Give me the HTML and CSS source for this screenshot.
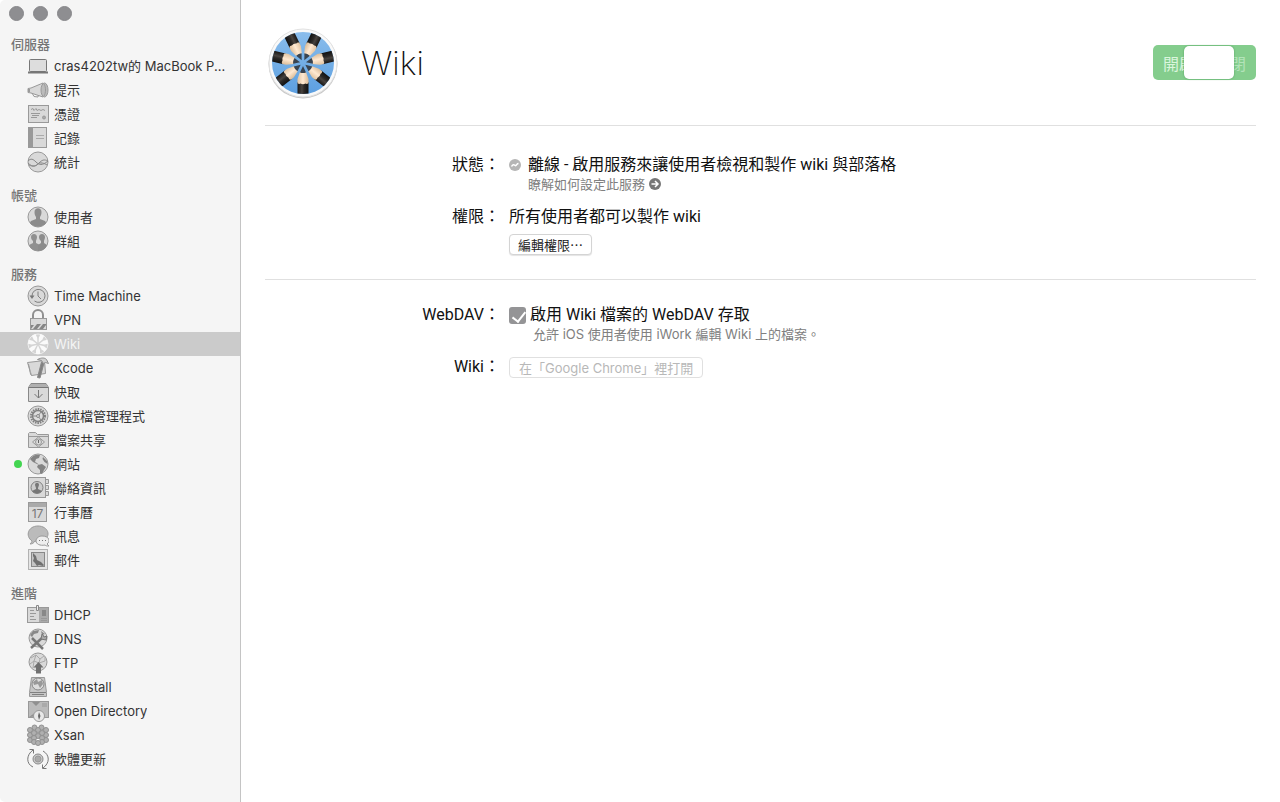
FILE: index.html
```html
<!DOCTYPE html>
<html lang="zh-Hant">
<head>
  <meta charset="UTF-8">
  <meta name="viewport" content="width=device-width, initial-scale=1.0">
  <title>Server - Wiki</title>
  <link rel="stylesheet" href="styles.css">
</head>
<body>

  <aside class="sidebar">
    <div class="window-buttons">
      <button type="button" aria-label="關閉視窗"></button>
      <button type="button" aria-label="縮到最小"></button>
      <button type="button" aria-label="縮放"></button>
    </div>

    <nav>
      <section class="group">
        <h2>伺服器</h2>
        <a href="#" class="item">
          <svg class="icon" viewBox="0 0 22 22"><rect x="2.500" y="4.500" width="17" height="12" rx="1" fill="#ddd" stroke="#777"/><path d="M1 17.500h20" stroke="#777" stroke-width="2"/></svg>
          <span>cras4202tw的 MacBook P...</span>
        </a>
        <a href="#" class="item">
          <svg class="icon" viewBox="0 0 22 22"><path d="M1 9.500l3-.5 12-5v14l-12-4-3-.5z"/><ellipse cx="17.500" cy="11" rx="3.500" ry="7" fill="#bbb"/><path d="M17 5c2 3 2 9 0 12M5 14l2 3.500 4 .5.5-2" fill="none"/><path d="M2 10v3" stroke-width="2"/></svg>
          <span>提示</span>
        </a>
        <a href="#" class="item">
          <svg class="icon" viewBox="0 0 22 22"><rect x="1.500" y="2.500" width="20" height="17"/><path d="M4 6.500l2-1 1 2 2-2 1 2 2-1 2 1 2-1 2 1M4 10.500h9M5 12.500h7M4 14.500h6" fill="none"/><circle cx="17" cy="14.500" r="1.500" fill="#aaa"/></svg>
          <span>憑證</span>
        </a>
        <a href="#" class="item">
          <svg class="icon" viewBox="0 0 22 22"><rect x="1.500" y=".500" width="18" height="20"/><path d="M2 1h4v19H2z" fill="#999" stroke="none"/><path d="M9 8.500h8M9 11.500h8" stroke="#aaa"/></svg>
          <span>記錄</span>
        </a>
        <a href="#" class="item">
          <svg class="icon" viewBox="0 0 22 22"><circle cx="11" cy="11" r="10"/><path d="M1 10c3-3 5-2 8 1s6 4 12-1M1 12c5 5 8 3 11 0s5-4 9-2M2 14c4 2 7 1 9-1s6-1 9 1" fill="none" stroke="#888"/></svg>
          <span>統計</span>
        </a>
      </section>

      <section class="group">
        <h2>帳號</h2>
        <a href="#" class="item">
          <svg class="icon" viewBox="0 0 22 22"><circle cx="11" cy="11" r="10"/><path d="M7.500 6c0-5 7-5 7 0 0 3-1 4-1.500 5v2l5 2c1 1 1 2 1 2-4 5-12 5-16 0 0 0 0-1 1-2l5-2v-2c-.5-1-1.500-2-1.500-5z" fill="#8c8c8c" stroke="none"/></svg>
          <span>使用者</span>
        </a>
        <a href="#" class="item">
          <svg class="icon" viewBox="0 0 22 22"><circle cx="11" cy="11" r="10"/><path d="M4 7c0-4 6-4 6 0 0 2-1 3-1 4v2l3 1.500V21C6 21 3 18 2 15l4-2v-2C5 10 4 9 4 7z" fill="#909090" stroke="none"/><path d="M12 7c0-4 6-4 6 0 0 2-1 3-1 4v2l3 2c-1 3-4 6-9 6v-6l3-2v-2c-1-1-2-2-2-4z" fill="#8c8c8c" stroke="none"/></svg>
          <span>群組</span>
        </a>
      </section>

      <section class="group">
        <h2>服務</h2>
        <a href="#" class="item">
          <svg class="icon" viewBox="0 0 22 22"><circle cx="11" cy="11" r="10"/><path d="M5 11a6.500 6.500 0 1 1 2.500 5M11 6.500V11l3 3" fill="none" stroke="#808080"/><path d="M2.500 10.500h5L5 14z" fill="#777" stroke="none"/></svg>
          <span>Time Machine</span>
        </a>
        <a href="#" class="item">
          <svg class="icon" viewBox="0 0 22 22"><path d="M6 11V6a5 5 0 0 1 10 0v5" fill="none" stroke="#909090" stroke-width="2"/><rect x="3.500" y="9.500" width="16" height="11"/><path d="M4 16h3l-3 4zM10 15h4l-4 5H6zM16 15h3v1l-3 4h-4z" fill="#858585" stroke="none"/></svg>
          <span>VPN</span>
        </a>
        <a href="#" class="item selected" aria-current="page">
          <svg class="icon" viewBox="-11 -11 22 22">
            <circle r="10" fill="#d4d4d4" stroke="#eee"/>
            <g fill="#fafafa" stroke="none">
              <path id="spoke" d="M0 1.500L-2 6v4h4V6z"/>
              <use href="#spoke" transform="rotate(51.43)"/>
              <use href="#spoke" transform="rotate(102.86)"/>
              <use href="#spoke" transform="rotate(154.29)"/>
              <use href="#spoke" transform="rotate(205.71)"/>
              <use href="#spoke" transform="rotate(257.14)"/>
              <use href="#spoke" transform="rotate(308.57)"/>
            </g>
          </svg>
          <span>Wiki</span>
        </a>
        <a href="#" class="item">
          <svg class="icon" viewBox="0 0 22 22"><path d="M.5 5.500l17-2 1 13-14 2z"/><path d="M1.500 7l2 10 1 1.500"/><path d="M14.500 5l-4 15.500 2.500.5 4-15z" fill="#808080" stroke="#888"/><path d="M10.500 2.500c4-2 7-2 9 0l2 4-3-1-2 1-2-3z" fill="#d0d0d0" stroke="#909090"/></svg>
          <span>Xcode</span>
        </a>
        <a href="#" class="item">
          <svg class="icon" viewBox="0 0 22 22"><path d="M1.500 6.500L4 2.500h15l2.500 4v14h-20z" stroke="#888"/><path d="M2 6l2-3h15l2 3z" fill="#b0b0b0" stroke="none"/><path d="M1.500 6.500h20M11.500 9v8M7.500 13l4 4 4-4" fill="none" stroke="#777"/></svg>
          <span>快取</span>
        </a>
        <a href="#" class="item">
          <svg class="icon" viewBox="0 0 22 22"><circle cx="11" cy="11" r="10"/><circle cx="11" cy="11" r="7" fill="none" stroke="#808080" stroke-width="2" stroke-dasharray="1.500 1"/><circle cx="11" cy="11" r="5.500" fill="#ddd" stroke="#808080" stroke-width="1.500"/><path d="M11 11H6M11 11l3-4M11 11l3 4" stroke="#888"/><circle cx="11" cy="11" r="1.500" stroke="#888"/></svg>
          <span>描述檔管理程式</span>
        </a>
        <a href="#" class="item">
          <svg class="icon" viewBox="0 0 22 22"><path d="M1.500 18.500v-14l1-1h6l2 2h11v13z"/><path d="M2 7.500h19"/><path d="M11.500 8l6 5-6 5-6-5z" fill="#ddd"/><circle cx="11.500" cy="13" r="3"/><path d="M11.500 11v3" stroke="#666"/></svg>
          <span>檔案共享</span>
        </a>
        <a href="#" class="item running">
          <svg class="icon" viewBox="0 0 22 22"><circle cx="11" cy="11" r="10"/><path d="M4 5c2-3 6-4 9-3l-1 3-3 1-1 3 2 1 2 2-2-1-4-2-3-3zM11 12l4-1 4 3-2 3-2 4-2-1v-3l-3-3zM16 4l4 4 .5 3-3-2-2-3z" fill="#838383" stroke="none"/></svg>
          <span>網站</span>
        </a>
        <a href="#" class="item">
          <svg class="icon" viewBox="0 0 22 22"><path d="M19 2.500h2.500v4H19M19 8.500h2.500v4H19M19 14.500h2.500v4H19"/><rect x="1.500" y=".500" width="17" height="20"/><circle cx="10" cy="10.500" r="6" fill="#ccc" stroke="#808080"/><path d="M8 8c0-3 4-3 4 0l-1 3v1l4 2c-2 3-8 3-10 0l4-2v-1z" fill="#777" stroke="none"/></svg>
          <span>聯絡資訊</span>
        </a>
        <a href="#" class="item">
          <svg class="icon" viewBox="0 0 22 22"><rect x="1.500" y="1.500" width="18" height="19"/><path d="M2 2h17v4H2z" fill="#aaa" stroke="none"/><text x="10.500" y="17" class="day">17</text></svg>
          <span>行事曆</span>
        </a>
        <a href="#" class="item">
          <svg class="icon" viewBox="0 0 22 22"><path d="M5 16C-2 11 1 1 11 1s14 10 5 15c-3 1-6 1-8 0-1 2-3 3-5 3 1-1 2-2 2-3z" fill="#bbb"/><path d="M20 19l2 2c-2 0-3 0-4-1-5 1-9-1-9-4s3-5 6-5c7 0 9 5 5 8z" fill="#eee"/><path d="M12 15.500h1m2 0h1m2 0h1" stroke="#777"/></svg>
          <span>訊息</span>
        </a>
        <a href="#" class="item">
          <svg class="icon" viewBox="0 0 22 22"><rect x="1.500" y=".500" width="19" height="20" fill="#e5e5e5" stroke="#777" stroke-dasharray="1 1"/><rect x="4.500" y="3.500" width="13" height="14" fill="#c4c4c4" stroke="#888"/><path d="M6 4l3 3 1 4 4 2 3 3-1 1-4-1-2 1-2-3-2-2 1-3-1-2z" fill="#707070" stroke="none"/></svg>
          <span>郵件</span>
        </a>
      </section>

      <section class="group">
        <h2>進階</h2>
        <a href="#" class="item">
          <svg class="icon" viewBox="0 0 22 22"><rect x=".5" y="3.500" width="21" height="15"/><path d="M12 4h9v14h-9z" fill="#aaa" stroke="none"/><path d="M3 6.500h4M3 9.500h6M3 12.500h4M3 15.500h6M14 14.500h6M14 16.500h6"/><path d="M15 6h4v6h-4z" fill="#888" stroke="none"/><path d="M9.500 1.500h2v5h-2z" fill="#eee" stroke="#888"/></svg>
          <span>DHCP</span>
        </a>
        <a href="#" class="item">
          <svg class="icon" viewBox="0 0 22 22"><circle cx="11" cy="10" r="9"/><path d="M6 3l6-1-1 3-4 1-2 3-2-2zM14 3l4 3-3 1z" fill="#888" stroke="none"/><path d="M4 20L15 10M5 10l11 11" stroke="#777" stroke-width="2.500"/><path d="M15 6l-1 5 5 1 1-4-3 1-1-2z" fill="#aaa" stroke="#777"/></svg>
          <span>DNS</span>
        </a>
        <a href="#" class="item">
          <svg class="icon" viewBox="0 0 22 22"><circle cx="11" cy="10" r="9"/><path d="M4 6l5-3 4 4 4-3M3 12l4-3 5 2 6-2M9 3l-2 6M13 7l-1 4M18 5v4M6 16l1-7" fill="none" stroke="#aaa"/><path d="M11.500 10l5 5.500h-2.500v6h-5v-6H6.500z" fill="#707070" stroke="none"/></svg>
          <span>FTP</span>
        </a>
        <a href="#" class="item">
          <svg class="icon" viewBox="0 0 22 22"><path d="M4.500 1.500h13l2 15v4h-17v-4z" fill="#c6c6c6"/><circle cx="11" cy="8" r="6" fill="#ddd" stroke="#888"/><path d="M6 6l4-3 1 3 4-2 1 4-3 4-2-4-4 1z" fill="#999" stroke="none"/><path d="M3 16.500h16M5 18.500h12" stroke="#808080"/></svg>
          <span>NetInstall</span>
        </a>
        <a href="#" class="item">
          <svg class="icon" viewBox="0 0 22 22"><rect x="1.500" y="1.500" width="20" height="16" fill="#bbb"/><path d="M5 2l4 4 4-4M2 17l7-5 3 4" fill="#909090" stroke="none"/><path d="M15 4h5M15 6h5"/><circle cx="12" cy="16" r="5.500" fill="#e8e8e8"/><path d="M12 12l1.500 4L12 20l-1-4z" fill="#666" stroke="none"/></svg>
          <span>Open Directory</span>
        </a>
        <a href="#" class="item">
          <svg class="icon" viewBox="0 0 22 22">
            <g fill="#b0b0b0" stroke="#909090">
              <circle cx="7.500" cy="3.500" r="2.500"/><circle cx="14.500" cy="3.500" r="2.500"/><circle cx="3" cy="6" r="2.500"/><circle cx="19" cy="6" r="2.500"/><circle cx="11" cy="6" r="2.500"/>
              <circle cx="3" cy="11" r="2.500"/><circle cx="19" cy="11" r="2.500"/><circle cx="7" cy="9" r="2.500"/><circle cx="15" cy="9" r="2.500"/><circle cx="11" cy="12" r="2.500"/>
              <circle cx="3" cy="16" r="2.500"/><circle cx="19" cy="16" r="2.500"/><circle cx="7" cy="14" r="2.500"/><circle cx="15" cy="14" r="2.500"/><circle cx="7" cy="18" r="2.500"/><circle cx="15" cy="18" r="2.500"/><circle cx="11" cy="19" r="2.500"/>
            </g>
          </svg>
          <span>Xsan</span>
        </a>
        <a href="#" class="item">
          <svg class="icon" viewBox="0 0 22 22"><circle cx="11" cy="11" r="5" fill="#ccc" stroke="#888"/><circle cx="11" cy="11" r="3" fill="#aaa" stroke="#999"/><path d="M6 19C-1 16-1 7 6 2M2.500 1.500h4v4M16 3c7 4 7 12 0 17M19.500 20.500h-4v-4" fill="none" stroke="#777"/></svg>
          <span>軟體更新</span>
        </a>
      </section>
    </nav>
  </aside>

  <main class="content">
    <header class="page-header">
      <svg class="logo" viewBox="-36 -36 72 72" aria-hidden="true">
        <defs>
          <linearGradient id="sky" x1="0" y1="0" x2="0" y2="1"><stop offset="0" stop-color="#8abdec"/><stop offset="1" stop-color="#5c9fe0"/></linearGradient>
          <linearGradient id="body" x1="0" x2="1"><stop offset="0" stop-color="#181615"/><stop offset=".4" stop-color="#48433f"/><stop offset=".6" stop-color="#2c2927"/><stop offset="1" stop-color="#111"/></linearGradient>
          <linearGradient id="wood" x1="0" x2="1"><stop offset="0" stop-color="#e2c4a2"/><stop offset=".5" stop-color="#ffe9d2"/><stop offset="1" stop-color="#dcbc98"/></linearGradient>
          <clipPath id="disc"><circle r="31"/></clipPath>
        </defs>
        <circle cy="1" r="34.500" fill="#c8c8c8"/>
        <circle r="34" fill="#f9f9f9" stroke="#e2e2e2"/>
        <circle r="31" fill="url(#sky)"/>
        <g clip-path="url(#disc)">
          <g id="pencil">
            <path d="M-5.500 19v14h11V19z" fill="url(#body)"/>
            <path d="M-3 9l-2.500 7v4q1.500 1.500 3 .5 2.500 1.500 5 0 1.500 1 3-.5v-4L3 9z" fill="url(#wood)"/>
            <path d="M0 3l-3 6.500q3 1 6 0z" fill="#3a4450"/>
          </g>
          <use href="#pencil" transform="rotate(51.43)"/>
          <use href="#pencil" transform="rotate(102.86)"/>
          <use href="#pencil" transform="rotate(154.29)"/>
          <use href="#pencil" transform="rotate(205.71)"/>
          <use href="#pencil" transform="rotate(257.14)"/>
          <use href="#pencil" transform="rotate(308.57)"/>
        </g>
      </svg>
      <h1>Wiki</h1>
      <button type="button" class="switch" role="switch" aria-checked="false" aria-label="Wiki 服務">
        <span>開啟</span>
        <span class="off">關閉</span>
        <span class="knob"></span>
      </button>
    </header>

    <section class="settings">
      <div class="label">狀態：</div>
      <div class="status">
        <svg class="status-icon" viewBox="0 0 12 12"><circle cx="6" cy="6" r="6" fill="#b5b5b5"/><path d="M2.500 7.500c2-4 3.500 0 4.500-1s1-2 2.500-2" fill="none" stroke="#fff" stroke-width="1.500"/></svg>
        <div>
          <p>離線 - 啟用服務來讓使用者檢視和製作 wiki 與部落格</p>
          <a href="#" class="hint">瞭解如何設定此服務
            <svg class="arrow" viewBox="0 0 12 12"><circle cx="6" cy="6" r="6" fill="#777"/><path d="M2.500 6h6M6 3l3 3-3 3" fill="none" stroke="#fff" stroke-width="1.500"/></svg>
          </a>
        </div>
      </div>

      <div class="label">權限：</div>
      <div>
        <p>所有使用者都可以製作 wiki</p>
        <button type="button" class="push permissions">編輯權限⋯</button>
      </div>
    </section>

    <section class="settings webdav">
      <div class="label">WebDAV：</div>
      <div>
        <div class="check">
          <input type="checkbox" id="webdav" checked>
          <label for="webdav">啟用 Wiki 檔案的 WebDAV 存取</label>
        </div>
        <p class="hint indent">允許 iOS 使用者使用 iWork 編輯 Wiki 上的檔案。</p>
      </div>

      <div class="label">Wiki：</div>
      <div>
        <button type="button" class="push" disabled>在「Google Chrome」裡打開</button>
      </div>
    </section>
  </main>

</body>
</html>
```
FILE: styles.css
```css
* {
  box-sizing: border-box;
}

body {
  margin: 0;
  display: flex;
  min-height: 100vh;
  background: #fff;
  color: #111;
  font-family: Inter, "Noto Sans CJK TC", sans-serif;
  font-size: 13px;
  line-height: 20px;
}

h1,
h2,
p {
  margin: 0;
}

a {
  color: inherit;
  text-decoration: none;
}

button {
  font-family: inherit;
}

/* Sidebar */
.sidebar {
  flex: 0 0 241px;
  background: #f5f5f5;
  border-right: 1px solid #c4c4c4;
  border-radius: 5px 0 0 5px;
}

.window-buttons {
  display: flex;
  gap: 9px;
  height: 34px;
  padding: 6px 9px;
}

.window-buttons button {
  width: 15px;
  height: 15px;
  padding: 0;
  border: 1px solid #88888b;
  border-radius: 50%;
  background: #8e8e91;
}

.group {
  margin-bottom: 11px;
}

.group h2 {
  padding-left: 11px;
  font-size: 13px;
  font-weight: 500;
  color: #757575;
}

.item {
  position: relative;
  display: flex;
  align-items: center;
  gap: 5px;
  height: 24px;
  padding: 0 12px 0 27px;
  font-size: 13px;
  color: #333;
}

.item span {
  overflow: hidden;
  text-overflow: ellipsis;
  white-space: nowrap;
}

.item.selected {
  background: #cbcbcb;
  color: #f5f5f5;
}

/* green light beside a running service */
.running::before {
  content: "";
  position: absolute;
  left: 14px;
  top: 8px;
  width: 8px;
  height: 8px;
  border-radius: 50%;
  background: #43d551;
}

.icon {
  flex: 0 0 22px;
  height: 22px;
  fill: #d9d9d9;
  stroke: #999;
}

.day {
  font-size: 12px;
  text-anchor: middle;
  fill: #777;
  stroke: none;
}

/* Content */
.content {
  flex: 1;
  min-width: 0;
  padding: 0 24px;
  font-family: Roboto, "Noto Sans CJK TC", sans-serif;
  font-size: 16px;
}

.page-header {
  display: flex;
  align-items: center;
  height: 126px;
  padding-left: 2px;
  border-bottom: 1px solid #e0e0e0;
}

.logo {
  width: 72px;
  height: 72px;
}

.page-header h1 {
  margin-left: 22px;
  font-family: Inter, sans-serif;
  font-size: 33px;
  font-weight: 200;
  line-height: 44px;
}

.switch {
  position: relative;
  display: flex;
  align-items: center;
  justify-content: space-between;
  width: 103px;
  height: 35px;
  margin-left: auto;
  padding: 0 10px;
  border: 0;
  border-radius: 5px;
  background: #84cd8d;
  color: #daf5dc;
  font-size: 16px;
}

.switch .off {
  color: #b3e3b9;
}

.knob {
  position: absolute;
  top: 1px;
  left: 31px;
  width: 50px;
  height: 33px;
  border-radius: 5px;
  background: #fff;
  box-shadow: 0 0 2px #4f9d5b;
}

.settings {
  display: grid;
  grid-template-columns: 235px 1fr;
  gap: 14px 9px;
  padding: 29px 0 24px;
}

.label {
  text-align: right;
}

.webdav {
  padding-top: 25px;
  border-top: 1px solid #e0e0e0;
}

.status {
  display: flex;
  gap: 7px;
}

.status-icon {
  width: 12px;
  height: 12px;
  margin-top: 4px;
}

.hint {
  display: flex;
  align-items: center;
  gap: 4px;
  font-family: Inter, "Noto Sans CJK TC", sans-serif;
  font-size: 13px;
  line-height: 18px;
  color: #808080;
}

.indent {
  padding-left: 24px;
}

.arrow {
  width: 12px;
  height: 12px;
}

.push {
  display: block;
  height: 21px;
  padding: 0 8px;
  border: 1px solid #d4d4d4;
  border-radius: 4px;
  background: #fff;
  box-shadow: 0 1px 1px #e4e4e4;
  color: #222;
  font-family: Inter, "Noto Sans CJK TC", sans-serif;
  font-size: 13px;
  line-height: 18px;
}

.permissions {
  margin-top: 7px;
}

.push:disabled {
  padding: 0 9px;
  border-color: #e0e0e0;
  box-shadow: none;
  color: #b8b8b8;
}

.check {
  display: flex;
  align-items: center;
  gap: 4px;
}

.check input {
  appearance: none;
  position: relative;
  width: 17px;
  height: 17px;
  margin: 0;
  border-radius: 3px;
  background: #949496;
}

.check input:checked::after {
  content: "";
  position: absolute;
  left: 6px;
  top: 2px;
  width: 6px;
  height: 11px;
  border: solid #fff;
  border-width: 0 2px 2px 0;
  transform: rotate(38deg);
}
```
